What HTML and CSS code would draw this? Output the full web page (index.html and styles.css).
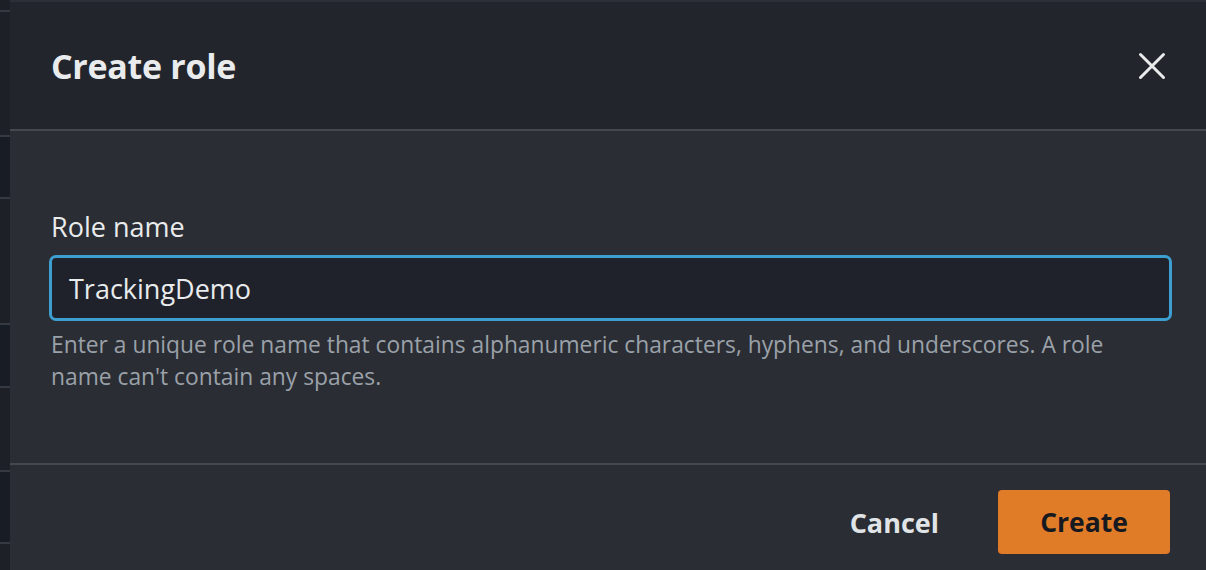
FILE: index.html
```html
<!DOCTYPE html>
<html lang="en">
<head>
<meta charset="utf-8">
<title>Create role</title>
<link rel="stylesheet" href="styles.css">
</head>
<body>
<div class="page">
  <div class="backdrop">
    <div class="strip s1"></div>
    <div class="strip s2"></div>
    <div class="strip s3"></div>
    <div class="strip s4"></div>
    <div class="strip s5"></div>
    <div class="strip s6"></div>
    <div class="strip s7"></div>
    <div class="strip s8"></div>
  </div>
  <div class="modal">
    <header class="modal-header">
      <h1 class="title">Create role</h1>
      <button class="close" aria-label="Close">
        <svg width="28" height="28" viewBox="0 0 28 28"><path d="M2.5 2.5 L25.5 25.5 M25.5 2.5 L2.5 25.5" stroke="#e9ebed" stroke-width="3" stroke-linecap="round" fill="none"/></svg>
      </button>
    </header>
    <section class="modal-body">
      <label class="label" for="rn">Role name</label>
      <div class="input">TrackingDemo</div>
      <p class="hint">Enter a unique role name that contains alphanumeric characters, hyphens, and underscores. A role name can't contain any spaces.</p>
    </section>
    <footer class="modal-footer">
      <button class="btn-link">Cancel</button>
      <button class="btn-primary">Create</button>
    </footer>
  </div>
</div>
</body>
</html>
```
FILE: styles.css
```css
html, body {
  margin: 0;
  padding: 0;
  background: #2a2d33;
}
body {
  font-family: "Open Sans", "Noto Sans", sans-serif;
  width: 1206px;
  height: 570px;
  overflow: hidden;
}
.page {
  display: flex;
  height: 570px;
}
.backdrop {
  width: 10px;
  flex: none;
  display: flex;
  flex-direction: column;
  background: #1b1e24;
}
.strip {
  border-bottom: 2px solid #353a42;
  background: #1c1f26;
}
.s1 { height: 10px; }
.s2 { height: 123px; background: #1d2027; }
.s3 { height: 60px; background: #181c25; }
.s4 { height: 124px; background: #1d2027; }
.s5 { height: 61px; background: #181c25; }
.s6 { height: 82px; background: #1d2027; }
.s7 { height: 70px; background: #181c25; }
.s8 { flex: 1; border-bottom: none; background: #1d2027; }

.modal {
  flex: 1;
  display: flex;
  flex-direction: column;
  background: #2a2d33;
}
.modal-header {
  height: 131px;
  flex: none;
  box-sizing: border-box;
  background: #22252c;
  border-top: 2px solid #2b2f37;
  border-bottom: 2px solid #444950;
  display: flex;
  align-items: center;
  justify-content: space-between;
  padding: 0 40px 0 41px;
}
.title {
  margin: 0;
  font-size: 34px;
  font-weight: 700;
  color: #e9ebed;
  letter-spacing: -0.3px;
}
.close {
  background: none;
  border: none;
  padding: 0;
  width: 28px;
  height: 28px;
  display: flex;
}
.modal-body {
  height: 334px;
  flex: none;
  box-sizing: border-box;
  padding: 78px 34px 0 39px;
  border-bottom: 2px solid #444950;
}
.label {
  display: block;
  font-size: 27px;
  color: #e9ebed;
  line-height: 36px;
  margin-left: 2px;
  margin-bottom: 10px;
}
.input {
  height: 66px;
  box-sizing: border-box;
  border: 3px solid #3d9fd0;
  border-radius: 7px;
  background: #1f222a;
  color: #e9ebed;
  font-size: 27px;
  display: flex;
  align-items: center;
  padding-left: 17px;
}
.hint {
  margin: 8px 0 0 2px;
  font-size: 22.8px;
  line-height: 32px;
  color: #9aa1a9;
  padding-right: 30px;
}
.modal-footer {
  flex: 1;
  display: flex;
  align-items: flex-start;
  justify-content: flex-end;
  padding: 25px 36px 0 0;
  gap: 59px;
}
.btn-link {
  background: none;
  border: none;
  font-family: inherit;
  font-size: 27px;
  font-weight: 700;
  color: #e1e4e7;
  height: 64px;
  padding: 0;
}
.btn-primary {
  width: 172px;
  height: 64px;
  border: none;
  border-radius: 4px;
  background: #e07b28;
  color: #16191f;
  font-family: inherit;
  font-size: 26.5px;
  font-weight: 700;
}
```
